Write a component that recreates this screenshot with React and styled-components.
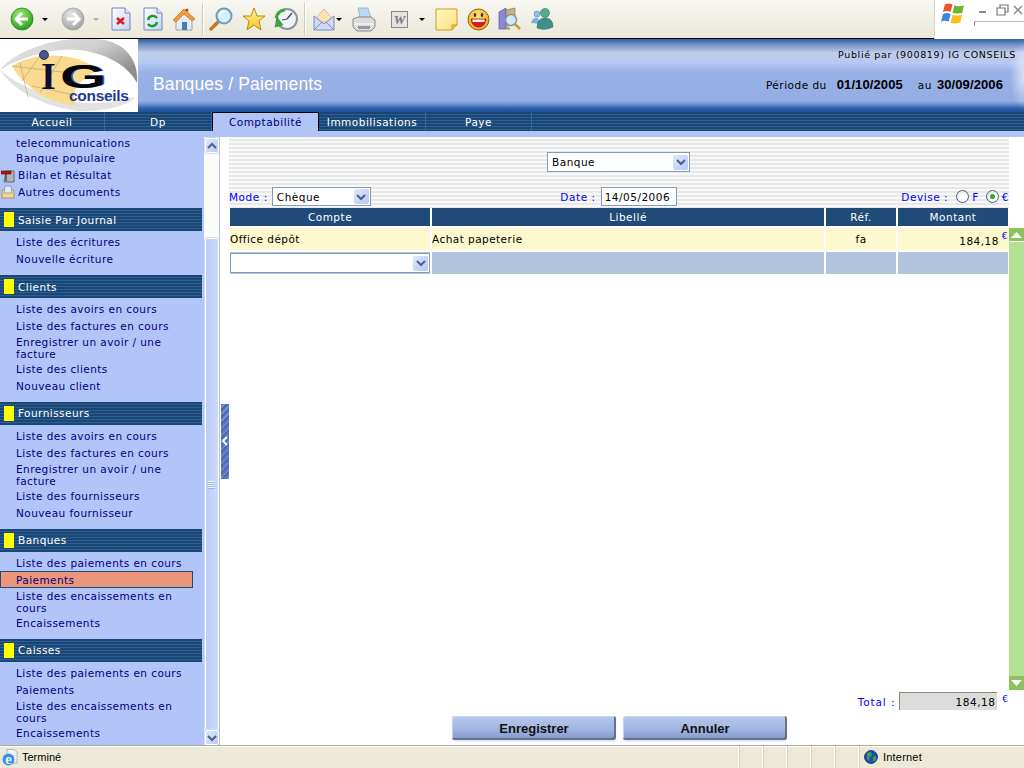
import React from "react";
import styled, { createGlobalStyle } from "styled-components";

const GlobalStyle = createGlobalStyle`
  html, body { margin: 0; padding: 0; height: 100%; overflow: hidden; background: #fff; }
  #root { height: 100%; }
  * { box-sizing: border-box; }
`;

const stripes = `repeating-linear-gradient(180deg, #1b4674 0 2px, #2c5f92 2px 3px)`;

const Page = styled.div`
  width: 1024px;
  height: 768px;
  display: flex;
  flex-direction: column;
  font-family: "DejaVu Sans", Verdana, sans-serif;
  font-size: 10.5px;
  overflow: hidden;
`;

const Toolbar = styled.div`
  height: 39px;
  flex: none;
  display: flex;
  background: linear-gradient(180deg, #f8f7f2 0%, #f1efe5 50%, #ebe8d8 100%);
`;
const ToolIcons = styled.div`
  flex: 1;
  display: flex;
  align-items: center;
  border-bottom: 1px solid #000;
  height: 39px;
`;
const Slot = styled.div`
  flex: none;
  display: flex;
  width: ${({ $w }) => $w}px;
  margin-left: ${({ $ml }) => $ml || 0}px;
  justify-content: center;
`;
const Caret = styled.span`
  flex: none;
  width: 0;
  height: 0;
  margin-left: ${({ $ml }) => $ml}px;
  border-left: 3px solid transparent;
  border-right: 3px solid transparent;
  border-top: 3px solid ${({ $off }) => ($off ? "#aaa" : "#000")};
`;
const Sep = styled.span`
  flex: none;
  width: 1px;
  height: 32px;
  margin-left: ${({ $ml }) => $ml}px;
  background: #d0cdb8;
  box-shadow: 1px 0 0 #fff;
`;
const WinBox = styled.div`
  width: 90px;
  height: 39px;
  flex: none;
  background: #fff;
  position: relative;
  border-left: 1px solid #d8d5c5;
  display: flex;
  padding: 2px 0 0 6px;
  gap: 9px;
`;
const WinCtrls = styled.div`
  display: flex;
  flex-direction: column;
  gap: 5px;
  flex: 1;
  padding-top: 2px;
`;
const WinBtns = styled.div`
  display: flex;
  align-items: center;
  gap: 7px;
`;
const WinTrack = styled.div`
  height: 5px;
  border-top: 1px solid #bbb;
  border-left: 1px solid #888;
`;

const Header = styled.div`
  height: 73px;
  flex: none;
  display: flex;
`;
const Logo = styled.div`
  width: 138px;
  flex: none;
  background: #fff;
`;
const Banner = styled.div`
  flex: 1;
  display: flex;
  justify-content: space-between;
  color: #000;
  background:
    radial-gradient(ellipse 14px 34px at 100% 50%, rgba(255, 255, 255, 0.65), rgba(255, 255, 255, 0) 100%),
    linear-gradient(180deg, #2f5fa6 0, #6c8cc0 5px, #c0cfe9 14px, #b7c8f3 24px, #97b0e6 34px, #94aee4 62px, #6f94d6 65px, #2e63b1 69px, #1f4f90 73px);
`;
const Title = styled.div`
  color: #fff;
  font-family: "Liberation Sans", Arial, sans-serif;
  font-size: 17.5px;
  letter-spacing: 0.15px;
  padding: 35px 0 0 15px;
`;
const HeadInfo = styled.div`
  display: flex;
  flex-direction: column;
  align-items: flex-end;
  padding: 10px 8px 0 0;
  font-size: 9.5px;
  letter-spacing: 0.65px;
`;
const Period = styled.div`
  display: flex;
  align-items: baseline;
  margin: 17px 13px 0 0;
  font-size: 10.5px;
  letter-spacing: 0.5px;
`;
const DateBold = styled.b`
  font-family: "Liberation Sans", Arial, sans-serif;
  font-size: 13px;
  letter-spacing: 0.1px;
  margin: 0 15px 0 10px;
  &:last-child { margin-right: 0; margin-left: 5px; }
`;

const Nav = styled.div`
  height: 25px;
  flex: none;
  padding-bottom: 6px;
  display: flex;
  background: #b0c4f6;
`;
const NavStrip = styled.div`
  flex: 1;
  display: flex;
  background: ${stripes};
`;
const Tab = styled.div`
  width: ${({ $w }) => $w}px;
  flex: none;
  height: 19px;
  display: flex;
  align-items: center;
  justify-content: center;
  letter-spacing: 0.5px;
  color: ${({ $active }) => ($active ? "#000080" : "#fff")};
  background: ${({ $active }) => ($active ? "#b0c4f6" : "transparent")};
  border-right: 1px solid ${({ $active }) => ($active ? "#000" : "#2f6aa8")};
  ${({ $active }) => $active && "border-left: 1px solid #000; border-top: 1px solid #000;"}
`;

const Body = styled.div`
  flex: 1;
  min-height: 0;
  display: flex;
`;
const Sidebar = styled.div`
  width: 204px;
  flex: none;
  background: #b2c5f8;
  overflow: hidden;
`;
const Item = styled.div`
  display: flex;
  align-items: center;
  gap: 3px;
  min-height: ${({ $first }) => ($first ? 12 : 17)}px;
  width: 193px;
  padding: ${({ $first }) => ($first ? "0" : "1.6px")} 8px ${({ $first }) => ($first ? "0" : "0.4px")} ${({ $icon }) => ($icon ? 1 : 16)}px;
  line-height: 12px;
  color: #000080;
  letter-spacing: 0.43px;
  ${({ $active }) => $active && "background: #e9967a; box-shadow: inset 0 0 0 1px #1f4a78;"}
`;
const SectionHead = styled.div`
  height: 23px;
  width: 202px;
  margin: 8px 0 2px;
  padding-left: 4px;
  display: flex;
  align-items: center;
  gap: 4px;
  color: #fff;
  letter-spacing: 0.45px;
  background: ${stripes};
`;
const Flag = styled.span`
  width: 10px;
  height: 15px;
  background: #ffff00;
`;

const VScroll = styled.div`
  width: 16px;
  flex: none;
  display: flex;
  flex-direction: column;
  align-items: center;
  padding-top: 1px;
  background: #fafaf6;
  border-right: 1px solid #b9c6dc;
`;
const ScrollBtn = styled.div`
  width: 14px;
  height: 15px;
  display: flex;
  align-items: center;
  justify-content: center;
  flex: none;
  border-radius: 2px;
  border: 1px solid #fff;
  background: linear-gradient(135deg, #dfe8fd, #b8c9f5);
  box-shadow: 0 0 0 0.5px #a9bbdf;
`;
const ScrollThumb = styled.div`
  width: 14px;
  height: 492px;
  margin-top: 85px;
  flex: none;
  display: flex;
  flex-direction: column;
  align-items: center;
  justify-content: center;
  gap: 1px;
  border-radius: 2px;
  border: 1px solid #fff;
  background: linear-gradient(90deg, #bccdf8, #cddafc);
  box-shadow: 0 0 0 0.5px #a9bbdf;
`;
const Grip = styled.span`
  width: 7px;
  height: 1px;
  background: #eef3ff;
  box-shadow: 0 1px 0 #9fb4e4;
`;

const SplitCol = styled.div`
  width: 9px;
  flex: none;
  display: flex;
  align-items: center;
  justify-content: flex-end;
`;
const Splitter = styled.div`
  width: 8px;
  height: 75px;
  display: flex;
  align-items: center;
  justify-content: center;
  background: repeating-linear-gradient(135deg, #5a78c4 0 2px, #7f97d8 2px 3px, #4f69b4 3px 5px);
`;

const Main = styled.div`
  flex: 1;
  min-width: 0;
  display: flex;
  flex-direction: column;
`;
const FilterPanel = styled.div`
  width: 780px;
  height: 71px;
  flex: none;
  padding: 15px 1px 0 0;
  display: flex;
  flex-direction: column;
  align-items: center;
  background: repeating-linear-gradient(180deg, #f9f9f9 0 2px, #e8e8e8 2px 4px);
`;
const FilterRow = styled.div`
  width: 100%;
  margin-top: 15px;
  display: grid;
  grid-template-columns: 1fr auto 1fr;
  align-items: center;
  color: #0000ff;
  letter-spacing: 0.55px;
`;
const Group = styled.div`
  display: flex;
  align-items: center;
  justify-content: ${({ $end }) => ($end ? "flex-end" : "flex-start")};
  gap: ${({ $gap }) => $gap || 0}px;
  margin-right: ${({ $end }) => ($end ? "-1px" : "0")};
`;
const SelectBox = styled.div`
  width: ${({ $w }) => $w};
  height: ${({ $h }) => $h || 20}px;
  display: flex;
  align-items: center;
  justify-content: space-between;
  padding: 0 1px 0 4px;
  background: #fff;
  color: #000;
  letter-spacing: 0.5px;
  border: 1px solid #7f9db9;
  flex: none;
`;
const SelectArrow = styled.span`
  width: 15px;
  height: 15px;
  display: flex;
  align-items: center;
  justify-content: center;
  border-radius: 2px;
  background: linear-gradient(135deg, #dfe8fd, #b5c7f6);
`;
const DateInput = styled.input`
  width: 76px;
  height: 19px;
  padding: 0 3px;
  border: 1px solid #7f9db9;
  background: #fff;
  color: #000;
  font: inherit;
  letter-spacing: 0.5px;
`;
const Radio = styled.span`
  width: 13px;
  height: 13px;
  border-radius: 50%;
  border: 1px solid #3c648c;
  background: radial-gradient(circle at 60% 60%, #fff 30%, #dcd9cc 100%);
  display: flex;
  align-items: center;
  justify-content: center;
  margin: ${({ $m }) => $m};
  &::after {
    content: "";
    display: ${({ $on }) => ($on ? "block" : "none")};
    width: 5px;
    height: 5px;
    border-radius: 50%;
    background: #32a732;
  }
`;

const TableArea = styled.div`
  flex: 1;
  min-height: 0;
  display: flex;
`;
const DataTable = styled.div`
  width: 780px;
  padding-left: 1px;
  flex: none;
  display: grid;
  grid-template-columns: 200px 392px 70px 110px;
  grid-auto-rows: min-content;
  column-gap: 2px;
  letter-spacing: 0.45px;
`;
const Th = styled.div`
  height: 18px;
  margin-bottom: 2px;
  display: flex;
  align-items: center;
  justify-content: center;
  color: #fff;
  background: #204a78;
  letter-spacing: 0.5px;
`;
const Td = styled.div`
  height: 22px;
  margin-bottom: 2px;
  display: flex;
  align-items: center;
  justify-content: ${({ $align }) => $align || "flex-start"};
  color: #000;
  background: ${({ $blank }) => ($blank ? "#b0c4de" : "#fdf8cd")};
`;
const Amount = styled.span`
  padding-top: 3px;
`;
const Euro = styled.sup`
  color: #0000ff;
  font-size: 9px;
  line-height: 1;
  margin: -6px 0 0 3px;
  align-self: center;
`;
const GreenScroll = styled.div`
  width: 15px;
  flex: none;
  margin-top: 20px;
  display: flex;
  flex-direction: column;
  justify-content: space-between;
  background: #b5e192;
`;
const GreenBtn = styled.div`
  height: 14px;
  display: flex;
  align-items: center;
  justify-content: center;
  background: #8ec35c;
  border-bottom: ${({ $top }) => ($top ? "1px solid #fff" : "none")};
`;
const TotalRow = styled.div`
  height: 26px;
  flex: none;
  padding: 2px 0 0 0;
  width: 780px;
  display: flex;
  align-items: flex-start;
  justify-content: flex-end;
  color: #0000ff;
  letter-spacing: 0.9px;
`;
const TotalLabel = styled.span`
  margin: 4px 4px 0 0;
`;
const TotalField = styled.div`
  width: 98px;
  height: 18px;
  padding-right: 2px;
  letter-spacing: 0.5px;
  display: flex;
  align-items: center;
  justify-content: flex-end;
  color: #000;
  background: #dcdcdc;
  border-top: 1px solid #8a8672;
  border-left: 1px solid #8a8672;
`;
const TotalEuro = styled.span`
  font-size: 9px;
  margin: 2px 0 0 5px;
`;
const Actions = styled.div`
  height: 29px;
  flex: none;
  width: 781px;
  display: flex;
  justify-content: center;
  gap: 7px;
`;
const ActionBtn = styled.button`
  width: 164px;
  height: 24px;
  padding: 1px 0 0;
  border: none;
  border-radius: 3px;
  font-family: "Liberation Sans", Arial, sans-serif;
  font-size: 13px;
  font-weight: bold;
  color: #111;
  background: linear-gradient(180deg, #b5c7ea 0%, #a3b8e3 50%, #8397d0 100%);
  box-shadow: inset -2px -2px 0 #6a7280, inset 1px 1px 0 #c8d4ef, 0 2px 2px #dfe8fb;
`;

const Status = styled.div`
  height: 23px;
  flex: none;
  display: flex;
  align-items: center;
  background: #ece9d8;
  border-top: 1px solid #aca899;
  font-family: "Liberation Sans", Arial, sans-serif;
  font-size: 11px;
  color: #000;
  box-shadow: inset 0 1px 0 #fff;
`;
const StatusMain = styled.div`
  width: 738px;
  flex: none;
  display: flex;
  align-items: center;
  gap: 4px;
  padding-left: 2px;
`;
const StatusCell = styled.div`
  width: 24px;
  height: 22px;
  flex: none;
  border-left: 1px solid #fff;
  box-shadow: inset 1px 0 0 #d6d3c2;
`;
const StatusZone = styled(StatusCell)`
  width: auto;
  display: flex;
  align-items: center;
  gap: 5px;
  padding-left: 5px;
  letter-spacing: 0.2px;
`;

const Chevron = ({ up }) => (
  <svg width="10" height="8" viewBox="0 0 10 8">
    <path d={up ? "M1 6 L5 2 L9 6" : "M1 2 L5 6 L9 2"} fill="none" stroke="#4d6185" strokeWidth="2" />
  </svg>
);

const Back = ({ off }) => (
  <svg width="24" height="24" viewBox="0 0 24 24">
    <defs>
      <radialGradient id={off ? "fw" : "bk"} cx="40%" cy="30%" r="80%">
        <stop offset="0" stopColor={off ? "#e8e8e8" : "#9fe878"} />
        <stop offset="1" stopColor={off ? "#9a9a9a" : "#159a10"} />
      </radialGradient>
    </defs>
    <circle cx="12" cy="12" r="11" fill={`url(#${off ? "fw" : "bk"})`} stroke={off ? "#999" : "#1a7a14"} strokeWidth="0.7" />
    <path
      d={off ? "M12 6 L18 12 L12 18 M18 12 H6" : "M12 6 L6 12 L12 18 M6 12 H18"}
      fill="none"
      stroke="#fff"
      strokeWidth="3"
    />
  </svg>
);

const Doc = ({ children }) => (
  <svg width="20" height="24" viewBox="0 0 20 24">
    <defs>
      <linearGradient id="docg" x1="0" y1="0" x2="1" y2="1">
        <stop offset="0" stopColor="#fff" />
        <stop offset="1" stopColor="#c4d2f2" />
      </linearGradient>
    </defs>
    <path d="M1 1 H14 L19 6 V23 H1 Z" fill="url(#docg)" stroke="#6f88c4" />
    <path d="M14 1 V6 H19" fill="#e8eefb" stroke="#6f88c4" />
    {children}
  </svg>
);

const Home = () => (
  <svg width="24" height="25" viewBox="0 0 24 25">
    <path d="M4 12 V23 H20 V12 L12 5 Z" fill="#e4ecf7" stroke="#8da2bd" />
    <path d="M1 13 L12 2 L23 12 L20 14 L12 7 L4 15 Z" fill="#f59a3c" stroke="#c76a1a" strokeWidth="0.7" />
    <rect x="10" y="15" width="5" height="8" fill="#5578a8" />
    <circle cx="15" cy="3" r="1.5" fill="#c0392b" />
  </svg>
);

const Search = () => (
  <svg width="24" height="25" viewBox="0 0 24 25">
    <path d="M10 14 L2 22" stroke="#c47a20" strokeWidth="3.5" strokeLinecap="round" />
    <circle cx="15" cy="9" r="7.5" fill="#d6effb" stroke="#6c9cc4" strokeWidth="2" />
    <path d="M11 7 Q13 4 16 4" stroke="#fff" strokeWidth="1.5" fill="none" />
  </svg>
);

const Star = () => (
  <svg width="24" height="24" viewBox="0 0 24 24">
    <defs>
      <linearGradient id="stg" x1="0" y1="0" x2="0" y2="1">
        <stop offset="0" stopColor="#fff6a8" />
        <stop offset="1" stopColor="#f8c21c" />
      </linearGradient>
    </defs>
    <path d="M12 1 L15 9 L23 9 L17 14 L19 23 L12 18 L5 23 L7 14 L1 9 L9 9 Z" fill="url(#stg)" stroke="#b98a10" />
  </svg>
);

const History = () => (
  <svg width="24" height="24" viewBox="0 0 24 24">
    <circle cx="13" cy="12" r="10" fill="#eef3f7" stroke="#8a94a0" strokeWidth="2" />
    <path d="M13 12 L18 6 M13 12 L8 13" stroke="#445" strokeWidth="1.2" />
    <path d="M2 11 A9 9 0 0 1 11 3" fill="none" stroke="#3da73a" strokeWidth="3" />
    <path d="M1 20 L9 18 L3 10 Z" fill="#3da73a" stroke="#1d7a1c" strokeWidth="0.5" />
  </svg>
);

const Mail = () => (
  <svg width="22" height="24" viewBox="0 0 22 24">
    <path d="M4 10 L11 2 L18 10 V15 H4 Z" fill="#fbe3b8" stroke="#c9a777" strokeWidth="0.7" />
    <path d="M1 9 L11 17 L21 9 V23 H1 Z" fill="#cfd8f7" stroke="#7d8cc4" />
    <path d="M1 23 L9 15 M21 23 L13 15" stroke="#7d8cc4" />
  </svg>
);

const Printer = () => (
  <svg width="24" height="25" viewBox="0 0 24 25">
    <path d="M6 1 L16 1 L19 11 H8 Z" fill="#bcd9f7" stroke="#8aa" strokeWidth="0.7" />
    <path d="M1 12 L6 10 H19 L23 13 V20 L19 24 H5 L1 20 Z" fill="#dcdcdc" stroke="#8a8a8a" />
    <path d="M2 17 H22" stroke="#fff" />
    <rect x="6" y="19" width="12" height="3" fill="#9c9c9c" />
  </svg>
);

const WordIcon = () => (
  <svg width="17" height="17" viewBox="0 0 17 17">
    <rect x="0.5" y="0.5" width="16" height="16" fill="#e4e4e4" stroke="#888" />
    <text x="8.5" y="13" textAnchor="middle" fontFamily="Liberation Serif" fontStyle="italic" fontWeight="bold" fontSize="13" fill="#777">W</text>
  </svg>
);

const Note = () => (
  <svg width="23" height="23" viewBox="0 0 23 23">
    <defs>
      <linearGradient id="ntg" x1="0" y1="0" x2="1" y2="1">
        <stop offset="0" stopColor="#fff8c4" />
        <stop offset="1" stopColor="#fde27a" />
      </linearGradient>
    </defs>
    <path d="M1 1 H22 V17 L17 22 H1 Z" fill="url(#ntg)" stroke="#cf9d20" />
    <path d="M22 17 H17 V22" fill="#f3c545" stroke="#cf9d20" />
  </svg>
);

const Smiley = () => (
  <svg width="23" height="23" viewBox="0 0 23 23">
    <defs>
      <radialGradient id="smg" cx="45%" cy="35%" r="70%">
        <stop offset="0" stopColor="#ffec70" />
        <stop offset="1" stopColor="#f0a010" />
      </radialGradient>
    </defs>
    <circle cx="11.5" cy="11.5" r="10.5" fill="url(#smg)" stroke="#9a5a10" />
    <ellipse cx="8" cy="7" rx="1.3" ry="2" fill="#333" />
    <ellipse cx="15" cy="7" rx="1.3" ry="2" fill="#333" />
    <path d="M4 11 H19 Q18 19 11.5 19 Q5 19 4 11 Z" fill="#e01818" stroke="#7a1010" strokeWidth="0.6" />
    <rect x="5.5" y="11.5" width="12" height="2.5" fill="#fff" />
  </svg>
);

const BookLens = () => (
  <svg width="23" height="24" viewBox="0 0 23 24">
    <path d="M1 5 L8 1 V22 L1 22 Z" fill="#8a88d8" stroke="#5a58a0" strokeWidth="0.7" />
    <path d="M8 3 L17 1 V10 H8 Z M8 10 V22 H12" fill="#c9b27c" stroke="#8a7748" strokeWidth="0.7" />
    <circle cx="13" cy="13" r="5.5" fill="#d4e9f7" stroke="#8a95a5" strokeWidth="1.5" />
    <path d="M17 17 L22 22" stroke="#c99a40" strokeWidth="2.5" />
  </svg>
);

const Messenger = () => (
  <svg width="24" height="22" viewBox="0 0 24 22">
    <circle cx="7" cy="6" r="3" fill="#8ec1e8" stroke="#4b86b8" strokeWidth="0.6" />
    <path d="M1 15 Q3 9 8 10 L10 16 Z" fill="#78b4e0" />
    <circle cx="15" cy="5" r="4.5" fill="#5aa88a" stroke="#2c7a68" strokeWidth="0.6" />
    <path d="M7 20 Q7 10 15 10 Q23 10 23 19 Q15 23 7 20 Z" fill="#3f8f8a" stroke="#2a6e78" strokeWidth="0.6" />
  </svg>
);

const WinFlag = () => (
  <svg width="25" height="23" viewBox="0 0 25 23">
    <path d="M4 2 Q8 0 12 2 L10 10 Q6 8 2 10 Z" fill="#e8552b" />
    <path d="M14 3 Q18 5 24 3 L22 11 Q16 12 12 11 Z" fill="#6cb82c" />
    <path d="M2 12 Q6 10 10 12 L8 20 Q4 18 0 20 Z" fill="#3a8ae0" />
    <path d="M12 13 Q16 14 22 13 L20 21 Q14 23 10 21 Z" fill="#f7c01c" />
  </svg>
);

const IgLogo = () => (
  <svg width="138" height="73" viewBox="0 0 138 73">
    <defs>
      <linearGradient id="lgGray" x1="0" y1="0" x2="1" y2="0.6">
        <stop offset="0" stopColor="#e8e8e8" />
        <stop offset="0.6" stopColor="#cfcfcf" />
        <stop offset="1" stopColor="#8f8f8f" />
      </linearGradient>
    </defs>
    <path d="M0 31 C 14 12, 60 -6, 105 1 C 128 6, 139 24, 137 44 C 126 22, 92 8, 60 11 C 35 14, 14 22, 0 31 Z" fill="url(#lgGray)" />
    <path d="M0 31 C 10 48, 40 68, 80 72 C 105 72, 125 68, 136 58 C 110 64, 85 66, 70 62 C 40 56, 15 44, 0 31 Z" fill="#e2e2e2" />
    <path d="M12 27 C 28 17, 52 13, 78 20 L 100 30 C 84 38, 68 50, 76 66 C 50 66, 24 48, 12 27 Z" fill="#f9da8e" />
    <path d="M20 24 L 28 58 M12 27 L 70 34 M40 17 L 22 42 M62 17 L 40 54 M32 47 L 74 56" stroke="#bda678" strokeWidth="0.7" fill="none" />
    <circle cx="44" cy="16" r="4.5" fill="#4a5590" stroke="#222" strokeWidth="0.8" />
    <text x="38" y="50" fontFamily="Liberation Serif" fontWeight="bold" fontSize="38" fill="#0a1030" transform="translate(3 0)">I</text>
    <g transform="translate(60 49) scale(1.75 1)">
      <text x="0.8" y="0" fontFamily="Liberation Sans" fontWeight="bold" fontSize="34" fill="#2a5cb0">G</text>
      <text x="0" y="-0.5" fontFamily="Liberation Sans" fontWeight="bold" fontSize="34" fill="#05070f">G</text>
    </g>
    <text x="69" y="62" fontFamily="Liberation Sans" fontWeight="bold" fontSize="15.5" letterSpacing="-0.3" fill="#1f3a90">conseils</text>
  </svg>
);

const BilanIcon = () => (
  <svg width="14" height="15" viewBox="0 0 14 15">
    <path d="M5 3 H13 V14 H3 Z" fill="#b4b4b4" stroke="#555" strokeWidth="0.8" />
    <path d="M0 3 H10 V6 H0 Z" fill="#e00000" stroke="#222" strokeWidth="0.6" />
    <path d="M5 6 V13" stroke="#222" />
  </svg>
);

const FolderIcon = () => (
  <svg width="14" height="14" viewBox="0 0 14 14">
    <path d="M1 5 H13 V13 H1 Z" fill="#f6d58e" stroke="#a88a50" strokeWidth="0.8" />
    <path d="M4 1 H10 L11 8 H3 Z" fill="#dfeafa" stroke="#6c8ab0" strokeWidth="0.7" />
  </svg>
);

const IeIcon = () => (
  <svg width="16" height="17" viewBox="0 0 16 17">
    <path d="M5 0.5 H12 L15 3 V14 H5 Z" fill="#f4f4f4" stroke="#8aa" strokeWidth="0.7" />
    <circle cx="6.5" cy="10.5" r="6" fill="#3d8fe0" />
    <text x="6.5" y="15" textAnchor="middle" fontFamily="Liberation Serif" fontWeight="bold" fontSize="15" fill="#e4f2ff">e</text>
  </svg>
);

const Globe = () => (
  <svg width="14" height="14" viewBox="0 0 14 14">
    <circle cx="7" cy="7" r="6.5" fill="#1c49c0" stroke="#0b1e50" strokeWidth="0.7" />
    <path d="M3 3 L7 2 L8 5 L5 8 L6 11 L3 9 Z M9 7 L12 6 L12 10 L9 12 Z" fill="#3aa83a" />
  </svg>
);

const sections = [
  { title: "Saisie Par Journal", items: ["Liste des écritures", "Nouvelle écriture"] },
  {
    title: "Clients",
    items: [
      "Liste des avoirs en cours",
      "Liste des factures en cours",
      "Enregistrer un avoir / une facture",
      "Liste des clients",
      "Nouveau client",
    ],
  },
  {
    title: "Fournisseurs",
    items: [
      "Liste des avoirs en cours",
      "Liste des factures en cours",
      "Enregistrer un avoir / une facture",
      "Liste des fournisseurs",
      "Nouveau fournisseur",
    ],
  },
  {
    title: "Banques",
    items: ["Liste des paiements en cours", "Paiements", "Liste des encaissements en cours", "Encaissements"],
    active: "Paiements",
  },
  {
    title: "Caisses",
    items: ["Liste des paiements en cours", "Paiements", "Liste des encaissements en cours", "Encaissements"],
  },
];

const tabs = [
  { label: "Accueil", w: 105 },
  { label: "Dp", w: 107 },
  { label: "Comptabilité", w: 107, active: true },
  { label: "Immobilisations", w: 107 },
  { label: "Paye", w: 106 },
];

const App = () => (
  <Page>
    <GlobalStyle />
    <Toolbar>
      <ToolIcons>
        <Slot $w={24} $ml={10}><Back /></Slot>
        <Caret $ml={8} />
        <Slot $w={24} $ml={13}><Back off /></Slot>
        <Caret $off $ml={8} />
        <Slot $w={20} $ml={12}><Doc><path d="M6 11 L13 17 M13 11 L6 17" stroke="#e01818" strokeWidth="2.5" /></Doc></Slot>
        <Slot $w={20} $ml={12}><Doc><path d="M5 13 A5 5 0 0 1 14 11 M14 15 A5 5 0 0 1 5 17" fill="none" stroke="#1c9a28" strokeWidth="2.4" /></Doc></Slot>
        <Slot $w={24} $ml={9}><Home /></Slot>
        <Sep $ml={6} />
        <Slot $w={24} $ml={6}><Search /></Slot>
        <Slot $w={24} $ml={9}><Star /></Slot>
        <Slot $w={24} $ml={8}><History /></Slot>
        <Sep $ml={6} />
        <Slot $w={22} $ml={8}><Mail /></Slot>
        <Caret $ml={1} />
        <Slot $w={24} $ml={10}><Printer /></Slot>
        <Slot $w={17} $ml={15}><WordIcon /></Slot>
        <Caret $ml={11} />
        <Slot $w={23} $ml={10}><Note /></Slot>
        <Slot $w={23} $ml={9}><Smiley /></Slot>
        <Slot $w={23} $ml={8}><BookLens /></Slot>
        <Slot $w={24} $ml={9}><Messenger /></Slot>
      </ToolIcons>
      <WinBox>
        <WinFlag />
        <WinCtrls>
          <WinBtns>
            <svg width="50" height="12" viewBox="0 0 50 12">
              <path d="M5 8 H12" stroke="#888" strokeWidth="2" />
              <path d="M23 4 H31 V11 H23 Z M26 4 V1 H34 V8 H31" fill="none" stroke="#777" strokeWidth="1.2" />
              <path d="M40 2 L48 10 M48 2 L40 10" stroke="#888" strokeWidth="1.4" />
            </svg>
          </WinBtns>
          <WinTrack />
        </WinCtrls>
      </WinBox>
    </Toolbar>

    <Header>
      <Logo><IgLogo /></Logo>
      <Banner>
        <Title>Banques / Paiements</Title>
        <HeadInfo>
          <div>Publié par (900819) IG CONSEILS</div>
          <Period>
            Période du<DateBold>01/10/2005</DateBold>au<DateBold>30/09/2006</DateBold>
          </Period>
        </HeadInfo>
      </Banner>
    </Header>

    <Nav>
      <NavStrip>
        {tabs.map((t) => (
          <Tab key={t.label} $w={t.w} $active={t.active}>{t.label}</Tab>
        ))}
      </NavStrip>
    </Nav>

    <Body>
      <Sidebar>
        <Item $first>telecommunications</Item>
        <Item>Banque populaire</Item>
        <Item $icon><BilanIcon />Bilan et Résultat</Item>
        <Item $icon><FolderIcon />Autres documents</Item>
        {sections.map((s) => (
          <div key={s.title}>
            <SectionHead><Flag />{s.title}</SectionHead>
            {s.items.map((label) => (
              <Item key={label} $active={s.active === label}>{label}</Item>
            ))}
          </div>
        ))}
      </Sidebar>
      <VScroll>
        <ScrollBtn><Chevron up /></ScrollBtn>
        <ScrollThumb><Grip /><Grip /><Grip /><Grip /></ScrollThumb>
        <ScrollBtn><Chevron /></ScrollBtn>
      </VScroll>
      <SplitCol>
        <Splitter>
          <svg width="6" height="10" viewBox="0 0 6 10">
            <path d="M5 1 L1 5 L5 9" fill="none" stroke="#fff" strokeWidth="2" />
          </svg>
        </Splitter>
      </SplitCol>
      <Main>
        <FilterPanel>
          <SelectBox $w="143px">Banque<SelectArrow><Chevron /></SelectArrow></SelectBox>
          <FilterRow>
            <Group $gap={4}>
              Mode :<SelectBox $w="99px" $h={19}>Chèque<SelectArrow><Chevron /></SelectArrow></SelectBox>
            </Group>
            <Group $gap={5}>
              Date :<DateInput readOnly value="14/05/2006" />
            </Group>
            <Group $end>
              Devise :<Radio $m="0 3px 0 8px" />F<Radio $on $m="0 3px 0 7px" />€
            </Group>
          </FilterRow>
        </FilterPanel>
        <TableArea>
          <DataTable>
            <Th>Compte</Th>
            <Th>Libellé</Th>
            <Th>Réf.</Th>
            <Th>Montant</Th>
            <Td>Office dépôt</Td>
            <Td>Achat papeterie</Td>
            <Td $align="center">fa</Td>
            <Td $align="flex-end"><Amount>184,18</Amount><Euro>€</Euro></Td>
            <Td $blank><SelectBox $w="200px">&nbsp;<SelectArrow><Chevron /></SelectArrow></SelectBox></Td>
            <Td $blank />
            <Td $blank />
            <Td $blank />
          </DataTable>
          <GreenScroll>
            <GreenBtn $top>
              <svg width="11" height="6" viewBox="0 0 11 6"><path d="M5.5 0 L11 6 H0 Z" fill="#fff" /></svg>
            </GreenBtn>
            <GreenBtn>
              <svg width="11" height="6" viewBox="0 0 11 6"><path d="M0 0 H11 L5.5 6 Z" fill="#fff" /></svg>
            </GreenBtn>
          </GreenScroll>
        </TableArea>
        <TotalRow>
          <TotalLabel>Total :</TotalLabel>
          <TotalField>184,18</TotalField>
          <TotalEuro>€</TotalEuro>
        </TotalRow>
        <Actions>
          <ActionBtn>Enregistrer</ActionBtn>
          <ActionBtn>Annuler</ActionBtn>
        </Actions>
      </Main>
    </Body>

    <Status>
      <StatusMain><IeIcon />Terminé</StatusMain>
      <StatusCell /><StatusCell /><StatusCell /><StatusCell /><StatusCell />
      <StatusZone><Globe />Internet</StatusZone>
    </Status>
  </Page>
);

export default App;
